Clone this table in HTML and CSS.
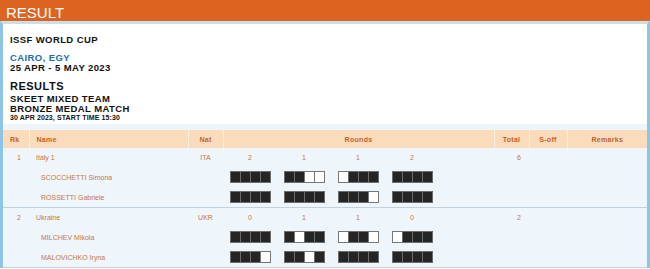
FILE: index.html
```html
<!DOCTYPE html>
<html>
<head>
<meta charset="utf-8">
<link rel="stylesheet" href="styles.css">
</head>
<body>
<div class="page">
  <div class="titlebar">RESULT</div>
  <div class="panel">
    <div class="event">
      <div class="comp">ISSF WORLD CUP</div>
      <div class="venue">CAIRO, EGY</div>
      <div class="dates">25 APR - 5 MAY 2023</div>
      <div class="doc">RESULTS</div>
      <div class="evname">SKEET MIXED TEAM</div>
      <div class="evname">BRONZE MEDAL MATCH</div>
      <div class="when">30 APR 2023, START TIME 15:30</div>
    </div>
    <div class="results">
      <table class="rtable">
        <colgroup>
          <col class="c-rk"><col class="c-name"><col class="c-nat"><col class="c-rounds"><col class="c-total"><col class="c-soff"><col class="c-rem">
        </colgroup>
        <thead>
          <tr>
            <th class="h-left">Rk</th>
            <th class="h-left">Name</th>
            <th>Nat</th>
            <th>Rounds</th>
            <th>Total</th>
            <th>S-off</th>
            <th>Remarks</th>
          </tr>
        </thead>
        <tbody>
          <tr class="team">
            <td class="rk">1</td>
            <td class="tname">Italy 1</td>
            <td class="nat">ITA</td>
            <td><div class="rgrid"><span>2</span><span>1</span><span>1</span><span>2</span><span></span></div></td>
            <td class="total">6</td>
            <td></td>
            <td></td>
          </tr>
          <tr class="ath">
            <td></td>
            <td class="aname">SCOCCHETTI Simona</td>
            <td></td>
            <td><div class="rgrid">
              <span class="series"><i class="s"></i><i class="s"></i><i class="s"></i><i class="s"></i></span>
              <span class="series"><i class="s"></i><i class="s"></i><i class="s miss"></i><i class="s miss"></i></span>
              <span class="series"><i class="s miss"></i><i class="s"></i><i class="s"></i><i class="s"></i></span>
              <span class="series"><i class="s"></i><i class="s"></i><i class="s"></i><i class="s"></i></span>
              <span></span>
            </div></td>
            <td></td><td></td><td></td>
          </tr>
          <tr class="ath last">
            <td></td>
            <td class="aname">ROSSETTI Gabriele</td>
            <td></td>
            <td><div class="rgrid">
              <span class="series"><i class="s"></i><i class="s"></i><i class="s"></i><i class="s"></i></span>
              <span class="series"><i class="s"></i><i class="s"></i><i class="s"></i><i class="s"></i></span>
              <span class="series"><i class="s"></i><i class="s"></i><i class="s"></i><i class="s miss"></i></span>
              <span class="series"><i class="s"></i><i class="s"></i><i class="s"></i><i class="s"></i></span>
              <span></span>
            </div></td>
            <td></td><td></td><td></td>
          </tr>
          <tr class="team">
            <td class="rk">2</td>
            <td class="tname">Ukraine</td>
            <td class="nat">UKR</td>
            <td><div class="rgrid"><span>0</span><span>1</span><span>1</span><span>0</span><span></span></div></td>
            <td class="total">2</td>
            <td></td>
            <td></td>
          </tr>
          <tr class="ath">
            <td></td>
            <td class="aname">MILCHEV Mikola</td>
            <td></td>
            <td><div class="rgrid">
              <span class="series"><i class="s"></i><i class="s"></i><i class="s"></i><i class="s"></i></span>
              <span class="series"><i class="s"></i><i class="s miss"></i><i class="s"></i><i class="s"></i></span>
              <span class="series"><i class="s miss"></i><i class="s"></i><i class="s"></i><i class="s miss"></i></span>
              <span class="series"><i class="s miss"></i><i class="s"></i><i class="s"></i><i class="s"></i></span>
              <span></span>
            </div></td>
            <td></td><td></td><td></td>
          </tr>
          <tr class="ath last">
            <td></td>
            <td class="aname">MALOVICHKO Iryna</td>
            <td></td>
            <td><div class="rgrid">
              <span class="series"><i class="s"></i><i class="s"></i><i class="s"></i><i class="s miss"></i></span>
              <span class="series"><i class="s"></i><i class="s"></i><i class="s miss"></i><i class="s"></i></span>
              <span class="series"><i class="s"></i><i class="s"></i><i class="s"></i><i class="s"></i></span>
              <span class="series"><i class="s"></i><i class="s"></i><i class="s"></i><i class="s"></i></span>
              <span></span>
            </div></td>
            <td></td><td></td><td></td>
          </tr>
        </tbody>
      </table>
    </div>
  </div>
</div>
</body>
</html>
```
FILE: styles.css
```css
html, body {
  margin: 0;
  padding: 0;
  background: #ffffff;
  font-family: "Liberation Sans", Arial, sans-serif;
}

.page {
  width: 650px;
}

.titlebar {
  height: 21px;
  box-sizing: border-box;
  padding: 5px 0 0 6px;
  line-height: 15px;
  font-size: 15px;
  color: #ffffff;
  background: #dc6420;
}

.panel {
  border-left: 3px solid #8ec4e5;
  border-right: 3px solid #8ec4e5;
  border-top: 3px solid #cadfec;
}

.event {
  background: #ffffff;
  padding: 10px 7px 2px;
  color: #111111;
  font-weight: bold;
  font-size: 9.5px;
  letter-spacing: 0.4px;
}

.comp {
  line-height: 11px;
}

.venue {
  margin-top: 8px;
  line-height: 10px;
  color: #1f6db0;
}

.dates {
  line-height: 10px;
}

.doc {
  margin-top: 7px;
  line-height: 13px;
  font-size: 11px;
  letter-spacing: 0.5px;
}

.evname {
  line-height: 10px;
}

.doc + .evname {
  margin-top: 1px;
}

.when {
  line-height: 8px;
  font-size: 7px;
  letter-spacing: 0.1px;
}

.results {
  background: #eef5fb;
  padding-top: 6px;
}

.rtable {
  width: 644px;
  table-layout: fixed;
  border-collapse: collapse;
  font-size: 7px;
  color: #c8763e;
}

.c-rk { width: 26px; }
.c-name { width: 159px; }
.c-nat { width: 35px; }
.c-rounds { width: 271px; }
.c-total { width: 35px; }
.c-soff { width: 38px; }
.c-rem { width: 80px; }

.rtable th {
  height: 18px;
  padding: 0;
  background: #fadcbc;
  color: #c4622a;
  font-weight: bold;
  letter-spacing: 0.3px;
  text-align: center;
  border-left: 1px solid #fcefe2;
}

.rtable th:first-child {
  border-left: none;
}

.rtable th.h-left {
  text-align: left;
  padding-left: 7px;
}

.rtable td {
  padding: 0;
  white-space: nowrap;
}

.team td {
  height: 19px;
}

.ath td {
  height: 20px;
}

.last td {
  border-bottom: 1px solid #c3d1dd;
}

.rk {
  text-align: right;
  padding-right: 8px !important;
}

.tname {
  padding-left: 7px !important;
}

.aname {
  padding-left: 12px !important;
}

.nat {
  text-align: center;
}

.total {
  text-align: right;
  padding-right: 8px !important;
}

.rgrid {
  display: grid;
  grid-template-columns: repeat(5, 54px);
  align-items: center;
  text-align: center;
}

.series {
  display: flex;
  justify-content: center;
}

.s {
  display: block;
  width: 11px;
  height: 12px;
  box-sizing: border-box;
  border: 1px solid #6c6c6c;
  background: #252525;
  margin-left: -1px;
}

.s:first-child {
  margin-left: 0;
}

.s.miss {
  background: #ffffff;
  border-color: #767676;
}
```
